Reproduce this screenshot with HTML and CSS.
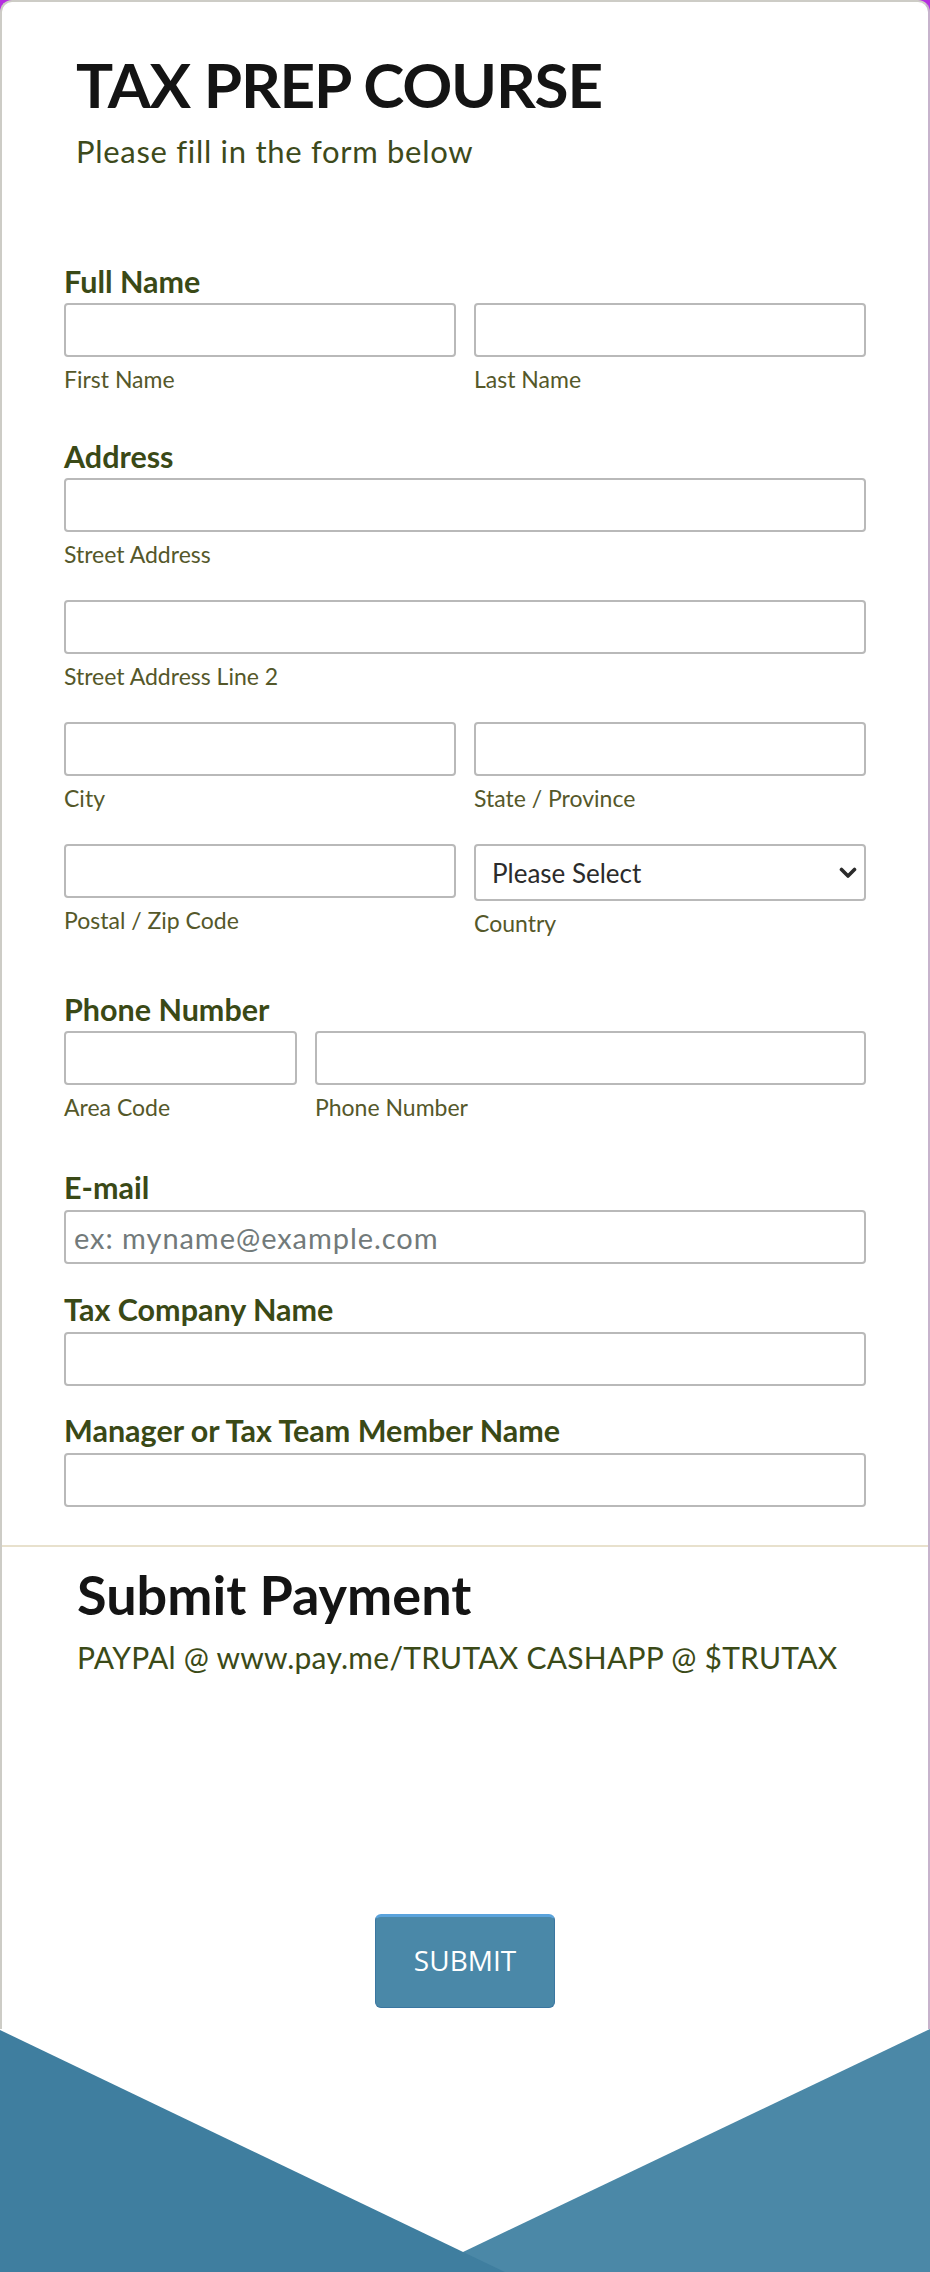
FILE: index.html
```html
<!DOCTYPE html>
<html lang="en">
<head>
<meta charset="utf-8">
<title>Tax Prep Course</title>
<link rel="stylesheet" href="styles.css">
</head>
<body>
<div class="card">
  <header class="header">
    <h1 class="title">TAX PREP COURSE</h1>
    <p class="subtitle">Please fill in the form below</p>
  </header>

  <form class="form">
    <div class="field f-name">
      <label class="q">Full Name</label>
      <div class="row two">
        <div class="cell"><input class="inp" type="text"><span class="sub">First Name</span></div>
        <div class="cell"><input class="inp" type="text"><span class="sub">Last Name</span></div>
      </div>
    </div>

    <div class="field f-address">
      <label class="q">Address</label>
      <div class="stack">
        <div class="cell"><input class="inp" type="text"><span class="sub">Street Address</span></div>
        <div class="cell"><input class="inp" type="text"><span class="sub">Street Address Line 2</span></div>
        <div class="row two">
          <div class="cell"><input class="inp" type="text"><span class="sub">City</span></div>
          <div class="cell"><input class="inp" type="text"><span class="sub">State / Province</span></div>
        </div>
        <div class="row two">
          <div class="cell"><input class="inp" type="text"><span class="sub">Postal / Zip Code</span></div>
          <div class="cell">
            <div class="select-wrap">
              <select class="sel"><option>Please Select</option></select>
              <svg class="chev" width="18" height="12" viewBox="0 0 18 12"><path d="M2.5 2.5 L9 9 L15.5 2.5" fill="none" stroke="#2b2b2b" stroke-width="3.6" stroke-linecap="round" stroke-linejoin="round"/></svg>
            </div>
            <span class="sub">Country</span>
          </div>
        </div>
      </div>
    </div>

    <div class="field f-phone">
      <label class="q">Phone Number</label>
      <div class="row phone">
        <div class="cell"><input class="inp" type="text"><span class="sub">Area Code</span></div>
        <div class="cell"><input class="inp" type="text"><span class="sub">Phone Number</span></div>
      </div>
    </div>

    <div class="field f-email">
      <label class="q">E-mail</label>
      <input class="inp" type="email" placeholder="ex: myname@example.com">
    </div>

    <div class="field f-company">
      <label class="q">Tax Company Name</label>
      <input class="inp" type="text">
    </div>

    <div class="field f-manager">
      <label class="q">Manager or Tax Team Member Name</label>
      <input class="inp" type="text">
    </div>
  </form>

  <section class="payment">
    <h2 class="pay-title">Submit Payment</h2>
    <p class="pay-text">PAYPAl @ www.pay.me/TRUTAX CASHAPP @ $TRUTAX</p>
  </section>

  <div class="actions">
    <button class="submit" type="button">SUBMIT</button>
  </div>
</div>
<svg class="chevron-bg" width="930" height="245" viewBox="0 0 930 245" preserveAspectRatio="none">
  <rect x="0" y="0" width="930" height="245" fill="#ffffff"/>
  <polygon points="463,223 930,0 930,245 463,245" fill="#4b88a7"/>
  <polygon points="0,1 509,245 0,245" fill="#3f7e9f"/>
</svg>
</body>
</html>
```

FILE: styles.css
```css
html {
  background: #ffffff;
}

body {
  margin: 0;
  font-family: Lato, "Open Sans", "DejaVu Sans", sans-serif;
  width: 930px;
  background: #b52ee0;
}

.card {
  background: #ffffff;
  border: 2px solid #cdccc6;
  border-right-color: #c7b3cc;
  border-bottom: none;
  border-radius: 12px 12px 0 0;
  padding-bottom: 21px;
}

.header {
  padding: 45px 62px 0 74px;
}

.title {
  margin: 0;
  font-size: 62px;
  line-height: 74px;
  font-weight: 700;
  color: #141414;
  letter-spacing: -1.2px;
}

.subtitle {
  margin: 12px 0 0;
  font-size: 31px;
  line-height: 36px;
  color: #3d4a1b;
  letter-spacing: 0.7px;
}

.form {
  padding: 94px 62px 38px;
  border-bottom: 2px solid #e8e1cd;
}

.q {
  display: block;
  font-size: 30.5px;
  line-height: 36px;
  font-weight: 700;
  color: #3a4916;
  margin-bottom: 4px;
}

.inp {
  display: block;
  box-sizing: border-box;
  width: 100%;
  height: 54px;
  margin: 0;
  border: 2px solid #b9b9b9;
  border-radius: 4px;
  background: #fff;
  padding: 0 8px;
  font-family: Lato, "Open Sans", sans-serif;
  font-size: 29px;
  letter-spacing: 0.95px;
  color: #2b2b2b;
}

.inp::placeholder {
  color: #727a7a;
}

.sub {
  display: block;
  margin-top: 7px;
  font-size: 23px;
  line-height: 30px;
  color: #55582a;
}

.row {
  display: grid;
  column-gap: 18px;
}

.row.two {
  grid-template-columns: 1fr 1fr;
}

.row.phone {
  grid-template-columns: 233px 1fr;
}

.stack {
  display: flex;
  flex-direction: column;
  gap: 31px;
}

.f-address { margin-top: 44px; }
.f-phone { margin-top: 53px; }
.f-email { margin-top: 47px; }
.f-company { margin-top: 27px; }
.f-manager { margin-top: 26px; }

.f-email .q,
.f-company .q,
.f-manager .q {
  margin-bottom: 5px;
}

.select-wrap {
  position: relative;
}

.sel {
  display: block;
  box-sizing: border-box;
  width: 100%;
  height: 57px;
  margin: 0;
  border: 2px solid #b9b9b9;
  border-radius: 4px;
  background: #fff;
  padding: 0 40px 0 16px;
  font-family: Lato, "Open Sans", sans-serif;
  font-size: 26px;
  color: #2b2b2b;
  appearance: none;
  -webkit-appearance: none;
}

.chev {
  position: absolute;
  right: 9px;
  top: 23px;
  pointer-events: none;
}

.payment {
  padding: 16px 62px 0 75px;
}

.pay-title {
  margin: 0;
  font-size: 54px;
  line-height: 64px;
  font-weight: 700;
  color: #141414;
}

.pay-text {
  margin: 12px 0 0;
  font-size: 30px;
  line-height: 36px;
  color: #3b4a17;
  letter-spacing: 0.25px;
}

.actions {
  display: flex;
  justify-content: center;
  padding-top: 239px;
}

.submit {
  box-sizing: border-box;
  width: 180px;
  height: 94px;
  background: #4a88a8;
  border: 1px solid #3b76a0;
  border-top: 3px solid #5aa3dc;
  border-radius: 6px;
  color: #ffffff;
  font-family: "Open Sans", Lato, sans-serif;
  font-size: 28px;
  padding: 0 0 4px;
}

.chevron-bg {
  display: block;
}
```
